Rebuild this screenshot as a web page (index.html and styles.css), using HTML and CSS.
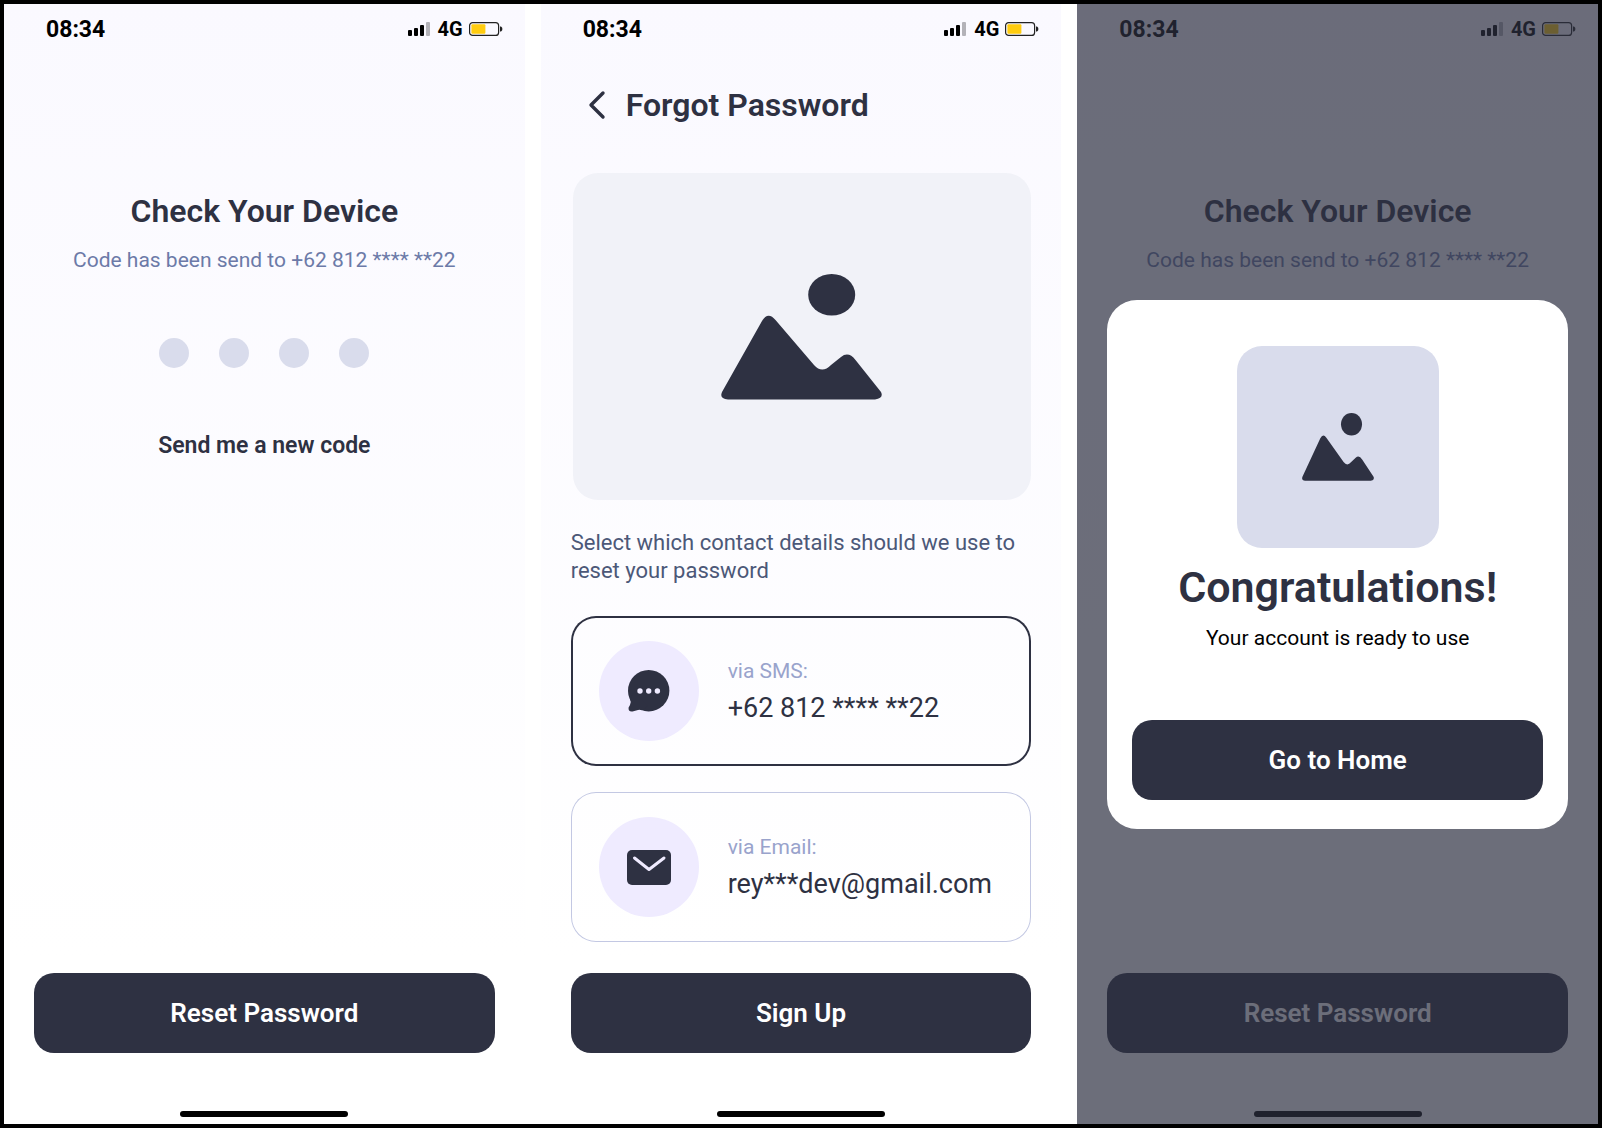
FILE: index.html
```html
<!DOCTYPE html>
<html lang="en">
  <head>
    <meta charset="UTF-8" />
    <meta name="viewport" content="width=device-width, initial-scale=1.0" />
    <title>Forgot Password</title>
    <link rel="stylesheet" href="styles.css" />
  </head>
  <body>
    <!-- shared icons -->
    <svg class="sprite" aria-hidden="true">
      <symbol id="icon-signal" viewBox="0 0 24 14">
        <rect x="0" y="8" width="4" height="6" rx="1" />
        <rect x="6" y="6" width="4" height="8" rx="1" />
        <rect x="12" y="3" width="4" height="11" rx="1" />
        <rect x="18" y="0" width="4" height="14" rx="1" fill="#b3b2b8" />
      </symbol>
      <symbol id="icon-battery" viewBox="0 0 34 14">
        <rect x="0.6" y="0.6" width="29" height="12.8" rx="3" fill="none" stroke="#222222" stroke-width="1.2" />
        <rect x="2.4" y="2.2" width="14" height="9.6" rx="1" fill="#ffcc10" />
        <path d="M31 4.6h1q1.4 0.6 1.4 2.4t-1.4 2.4h-1z" fill="#222222" />
      </symbol>
      <symbol id="icon-picture" viewBox="0 0 161 126" preserveAspectRatio="none">
        <ellipse cx="110.7" cy="20.8" rx="23.5" ry="20.8" />
        <path d="M1 118L41 47Q47 37 54.5 46L93 91Q101 100 110 91L120 83Q127.5 77 134.5 86L160 118Q163 124 154 125.5H7Q-2 125 1 118Z" />
      </symbol>
    </svg>

    <main class="screens">
      <section class="screen">
        <header class="status-bar">
          <span class="status-time">08:34</span>
          <div class="status-icons">
            <svg class="icon-signal"><use href="#icon-signal" /></svg>
            <span class="status-network">4G</span>
            <svg class="icon-battery"><use href="#icon-battery" /></svg>
          </div>
        </header>
        <form class="verify">
          <h1 class="title">Check Your Device</h1>
          <p class="verify-text">Code has been send to +62 812 **** **22</p>
          <div class="code">
            <input class="code-digit" type="text" maxlength="1" aria-label="Digit 1" />
            <input class="code-digit" type="text" maxlength="1" aria-label="Digit 2" />
            <input class="code-digit" type="text" maxlength="1" aria-label="Digit 3" />
            <input class="code-digit" type="text" maxlength="1" aria-label="Digit 4" />
          </div>
          <a class="resend" href="#">Send me a new code</a>
          <button class="btn" type="button">Reset Password</button>
        </form>
        <div class="home-indicator"></div>
      </section>

      <section class="screen">
        <header class="status-bar">
          <span class="status-time">08:34</span>
          <div class="status-icons">
            <svg class="icon-signal"><use href="#icon-signal" /></svg>
            <span class="status-network">4G</span>
            <svg class="icon-battery"><use href="#icon-battery" /></svg>
          </div>
        </header>
        <form class="forgot">
          <div class="page-head">
            <button class="back" type="button" aria-label="Back">
              <svg width="18" height="30" viewBox="0 0 18 30">
                <path d="M15 3L3 15L15 27" fill="none" stroke="#2e3142" stroke-width="3.4" stroke-linecap="round" stroke-linejoin="round" />
              </svg>
            </button>
            <h1 class="title">Forgot Password</h1>
          </div>
          <div class="hero">
            <svg class="hero-icon"><use href="#icon-picture" /></svg>
          </div>
          <p class="forgot-text">Select which contact details should we use to reset your password</p>
          <div class="options">
            <label class="option">
              <input class="option-input" type="radio" name="contact" checked />
              <span class="option-icon">
                <svg width="42" height="42" viewBox="0 0 42 42" fill="#2e3142">
                  <circle cx="20.7" cy="20.7" r="20.7" />
                  <path d="M2 29Q3.5 32 2 35L0.6 37.5Q0 42 4.5 41.5L10 40Q12 39.3 14 40.3L20 36L6 22Z" />
                  <g fill="#efebff">
                    <circle cx="12" cy="21" r="2.7" />
                    <circle cx="20.7" cy="21" r="2.7" />
                    <circle cx="29.4" cy="21" r="2.7" />
                  </g>
                </svg>
              </span>
              <span class="option-body">
                <span class="option-label">via SMS:</span>
                <span class="option-value">+62 812 **** **22</span>
              </span>
            </label>
            <label class="option">
              <input class="option-input" type="radio" name="contact" />
              <span class="option-icon">
                <svg width="44" height="35" viewBox="0 0 44 35">
                  <rect width="44" height="35" rx="5" fill="#2e3142" />
                  <path d="M7.5 8L22 19.5L37 8" fill="none" stroke="#efebff" stroke-width="3" stroke-linecap="round" stroke-linejoin="round" />
                </svg>
              </span>
              <span class="option-body">
                <span class="option-label">via Email:</span>
                <span class="option-value">rey***dev@gmail.com</span>
              </span>
            </label>
          </div>
          <button class="btn" type="button">Sign Up</button>
        </form>
        <div class="home-indicator"></div>
      </section>

      <section class="screen">
        <header class="status-bar">
          <span class="status-time">08:34</span>
          <div class="status-icons">
            <svg class="icon-signal"><use href="#icon-signal" /></svg>
            <span class="status-network">4G</span>
            <svg class="icon-battery"><use href="#icon-battery" /></svg>
          </div>
        </header>
        <div class="verify">
          <h1 class="title">Check Your Device</h1>
          <p class="verify-text">Code has been send to +62 812 **** **22</p>
          <button class="btn" type="button">Reset Password</button>
        </div>
        <div class="home-indicator"></div>

        <div class="overlay">
          <div class="modal" role="dialog" aria-labelledby="modal-title">
            <div class="modal-picture">
              <svg class="modal-icon"><use href="#icon-picture" /></svg>
            </div>
            <h2 class="modal-title" id="modal-title">Congratulations!</h2>
            <p class="modal-text">Your account is ready to use</p>
            <button class="btn" type="button">Go to Home</button>
          </div>
        </div>
      </section>
    </main>
  </body>
</html>
```
FILE: styles.css
```css
* {
  box-sizing: border-box;
}
body {
  margin: 0;
  font-family: Roboto, "Open Sans", sans-serif;
  color: #2e3142;
}
h1,
h2,
p {
  margin: 0;
}
.sprite {
  display: none;
}
.screens {
  display: grid;
  grid-template-columns: repeat(3, 1fr);
  gap: 16px;
  min-height: 100vh;
  border: 4px solid #000;
  background: #fff;
}
.screen {
  position: relative;
  display: flex;
  flex-direction: column;
  background: linear-gradient(#faf9ff, #fff 85%);
}

/* status bar */
.status-bar {
  display: flex;
  justify-content: space-between;
  align-items: center;
  height: 50px;
  padding: 0 22px 0 42px;
  color: #000;
}
.status-time {
  font-size: 23px;
  font-weight: 700;
}
.status-icons {
  display: flex;
  align-items: center;
  gap: 6px;
}
.status-network {
  font-size: 20px;
  font-weight: 700;
}
.icon-signal {
  width: 24px;
  height: 14px;
}
.icon-battery {
  width: 34px;
  height: 14px;
}
.home-indicator {
  width: 168px;
  height: 6px;
  margin: 58px auto 7px;
  border-radius: 3px;
  background: #000;
}

/* shared */
.title {
  font-size: 32px;
  font-weight: 600;
  line-height: 40px;
}
.btn {
  width: 100%;
  height: 80px;
  margin-top: auto;
  border: 0;
  border-radius: 20px;
  background: #2e3142;
  color: #fff;
  font: 600 26px Roboto, "Open Sans", sans-serif;
}

/* check your device */
.verify {
  flex: 1;
  display: flex;
  flex-direction: column;
  align-items: center;
  padding: 137px 30px 0;
}
.verify-text {
  margin-top: 15px;
  color: #6c7aa8;
  font-size: 21px;
  line-height: 28px;
}
.code {
  display: flex;
  gap: 30px;
  margin-top: 64px;
}
.code-digit {
  width: 30px;
  height: 30px;
  padding: 0;
  border: 0;
  border-radius: 50%;
  background: #d9dcec;
  text-align: center;
}
.resend {
  margin-top: 64px;
  color: #2e3142;
  font-size: 23px;
  font-weight: 600;
  line-height: 28px;
  text-decoration: none;
}

/* forgot password */
.forgot {
  flex: 1;
  display: flex;
  flex-direction: column;
  padding: 31px 30px 0;
}
.page-head {
  display: flex;
  align-items: center;
  gap: 20px;
  padding-left: 17px;
}
.back {
  display: flex;
  padding: 0;
  border: 0;
  background: none;
}
.hero {
  display: flex;
  justify-content: center;
  align-items: center;
  height: 327px;
  margin: 48px 0 0 2px;
  border-radius: 25px;
  background: #f1f2f8;
}
.hero-icon {
  width: 161px;
  height: 126px;
  fill: #2e3142;
}
.forgot-text {
  margin-top: 29px;
  color: #4c5878;
  font-size: 22px;
  line-height: 28px;
}
.options {
  display: grid;
  gap: 26px;
  margin-top: 31px;
}
.option {
  display: flex;
  align-items: center;
  gap: 29px;
  height: 150px;
  padding: 0 28px;
  border-radius: 25px;
  box-shadow: inset 0 0 0 1px #c3c8e3;
}
.option:has(:checked) {
  box-shadow: inset 0 0 0 2px #2e3142;
}
.option-input {
  position: absolute;
  opacity: 0;
}
.option-icon {
  display: flex;
  justify-content: center;
  align-items: center;
  flex: none;
  width: 100px;
  height: 100px;
  border-radius: 50%;
  background: #efebff;
}
.option-body {
  display: flex;
  flex-direction: column;
  gap: 6px;
}
.option-label {
  color: #99a3cc;
  font-size: 21px;
  line-height: 28px;
}
.option-value {
  font-size: 27px;
  line-height: 34px;
}

/* congratulations */
.overlay {
  position: absolute;
  inset: 0;
  padding: 296px 30px 0;
  background: rgba(46, 49, 66, 0.7);
}
.modal {
  display: flex;
  flex-direction: column;
  align-items: center;
  padding: 46px 25px 29px;
  border-radius: 30px;
  background: #fff;
}
.modal-picture {
  display: flex;
  justify-content: center;
  align-items: center;
  width: 202px;
  height: 202px;
  border-radius: 25px;
  background: #d9dcec;
}
.modal-icon {
  width: 72px;
  height: 68px;
  fill: #2e3142;
}
.modal-title {
  margin-top: 15px;
  font-size: 43px;
  font-weight: 600;
  line-height: 48px;
}
.modal-text {
  margin-top: 13px;
  color: #000;
  font-size: 21px;
  line-height: 28px;
}
.modal .btn {
  margin-top: 68px;
}
```
